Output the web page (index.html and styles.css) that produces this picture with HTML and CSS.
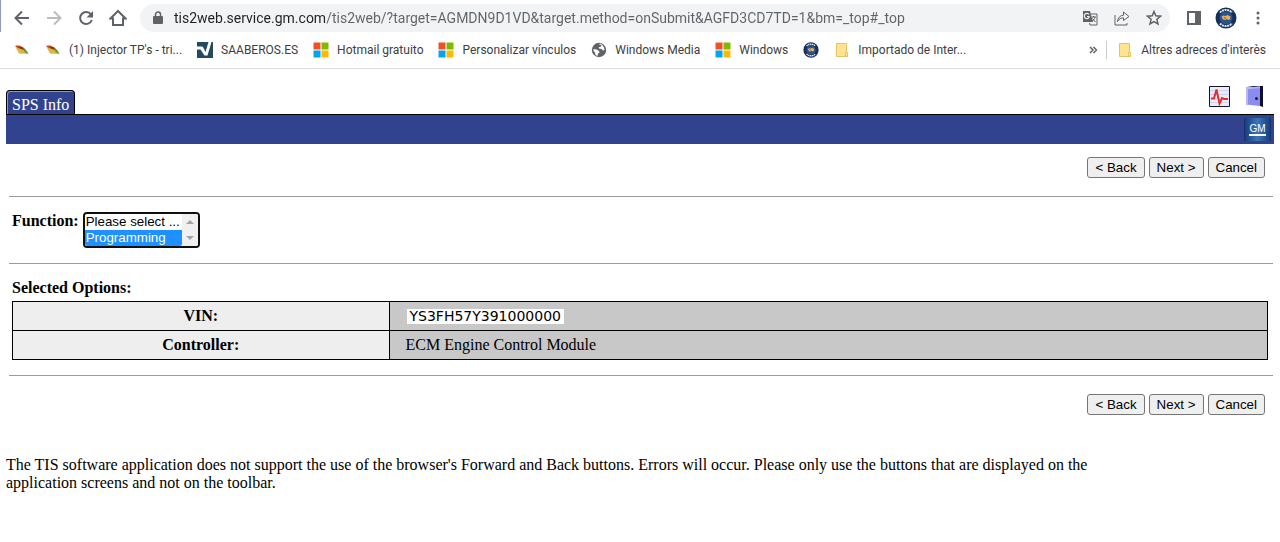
FILE: index.html
```html
<!DOCTYPE html>
<html lang="en">
<head>
    <meta charset="UTF-8">
    <title>SPS Info</title>
    <link rel="stylesheet" href="styles.css">
</head>
<body>
<!-- shared icons -->
<svg class="defs" width="0" height="0">
    <symbol id="ms" viewBox="0 0 16 16">
        <path fill="#f25022" d="M0.500 0.500h7v7h-7z"/><path fill="#7fba00" d="M8.500 0.500h7v7h-7z"/>
        <path fill="#00a4ef" d="M0.500 8.500h7v7h-7z"/><path fill="#ffb900" d="M8.500 8.500h7v7h-7z"/>
    </symbol>
    <symbol id="folder" viewBox="0 0 16 16">
        <path fill="#fee391" stroke="#e3c463" d="M2.500 1.500h10v9h1v4h-11z"/>
        <path fill="#fff0b8" stroke="#e3c463" d="M11.500 10.500h2v3.500h-2z"/>
    </symbol>
    <symbol id="wing" viewBox="0 0 16 16">
        <path fill="#c9502c" d="M1 4c5-1.500 9 1 10.500 5l-4.500 1z"/>
        <path fill="#7b3b20" d="M4 4.500l5 1 3 4-5-1z"/>
        <path fill="#e3b53c" d="M1.500 5l9.500 3.500 3.500 3.500-9.500-.5z"/>
        <path fill="#5f9a3f" d="M9 5.500c3 1.500 4.500 4 5.500 6.500l-4-2z"/>
    </symbol>
    <symbol id="badge" viewBox="0 0 22 22">
        <circle cx="11" cy="11" r="10.500" fill="#17305a"/>
        <path d="M5 5.500a8.300 8.300 0 0 1 12 0M5 16.500a8.300 8.300 0 0 0 12 0" fill="none" stroke="#dbe4ef" stroke-width="2" stroke-dasharray="2 .6"/>
        <circle cx="11" cy="11" r="6.500" fill="#28568c"/>
        <path fill="#e7aa63" d="M6.500 9.500l2-1 2 .5 2-1 3 1.500-.5 3-2 .500-1-1-1.500 1-2.500-.5z"/>
        <path d="M9 10.500l2 1" stroke="#8a5a34"/>
    </symbol>
</svg>

<div class="browser">
    <div class="toolbar">
        <button class="tool" aria-label="Back"><svg width="16" height="16" viewBox="0 0 16 16"><path class="line" d="M15 8H2M8 1.500L1.500 8 8 14.500"/></svg></button>
        <button class="tool off" aria-label="Forward"><svg width="16" height="16" viewBox="0 0 16 16"><path class="line" d="M1 8h13M8 1.500L14.500 8 8 14.500"/></svg></button>
        <button class="tool" aria-label="Reload"><svg width="16" height="16" viewBox="0 0 16 16"><path class="line" d="M13 4.500A6 6 0 1 0 13.800 10"/><path class="solid" d="M15 1v6.500H8.500z"/></svg></button>
        <button class="tool" aria-label="Home"><svg width="18" height="18" viewBox="0 0 18 18"><path class="line" d="M1.500 9.500L9 2l7.500 7.500H14V16H4V9.500z"/></svg></button>
        <div class="omnibox">
            <svg class="lock" width="12" height="14" viewBox="0 0 12 14"><path class="solid" d="M2 5h8a1 1 0 0 1 1 1v6a1 1 0 0 1-1 1H2a1 1 0 0 1-1-1V6a1 1 0 0 1 1-1z"/><path class="line thin" d="M3.500 5V3.500a2.500 2.500 0 0 1 5 0V5"/></svg>
            <input class="url" type="text" aria-label="Address" value="tis2web.service.gm.com/tis2web/?target=AGMDN9D1VD&amp;target.method=onSubmit&amp;AGFD3CD7TD=1&amp;bm=_top#_top">
            <button class="tool" aria-label="Translate"><svg width="16" height="16" viewBox="0 0 16 16">
                <path class="solid" d="M1 1h7l3 11H1z"/><path d="M7 4.500A2.600 2.600 0 1 0 7 7.500V6.500H5" fill="none" stroke="#f1f3f4" stroke-width="1.200"/>
                <path d="M9 4h6v11H8l-.5-2" fill="none" stroke="#5f6368"/><path d="M9.500 7h4.500M11.500 6v1M13 7c-.5 2-1.500 3.500-3 4.500M10.500 8.500l3 3.500" fill="none" stroke="#5f6368"/></svg></button>
            <button class="tool" aria-label="Share"><svg width="16" height="16" viewBox="0 0 16 16"><path class="line hair" d="M1 5v10h12v-2M3.500 11.500c.5-4 2.500-6 6-6.300V2L15 6.500l-5.500 4V7.800C7 7.800 5 9 3.500 11.500z"/></svg></button>
            <button class="tool" aria-label="Bookmark"><svg width="16" height="16" viewBox="0 0 16 16"><path class="line thin" d="M8 1.500l1.800 4.300 4.700.4-3.600 3.100 1.100 4.600L8 11.500l-4 2.400 1.100-4.600L1.500 6.200l4.700-.4z"/></svg></button>
        </div>
        <button class="tool" aria-label="Side panel"><svg width="14" height="14" viewBox="0 0 14 14"><path class="solid" fill-rule="evenodd" d="M0 0h14v14H0zM2 2v10h6V2z"/></svg></button>
        <button class="tool" aria-label="Profile"><svg width="22" height="22"><use href="#badge"/></svg></button>
        <button class="tool" aria-label="Menu"><svg width="4" height="14" viewBox="0 0 4 14"><circle class="solid" cx="2" cy="2" r="1.500"/><circle class="solid" cx="2" cy="7" r="1.500"/><circle class="solid" cx="2" cy="12" r="1.500"/></svg></button>
    </div>
    <div class="bookmarks">
        <a href="#" aria-label="Injector"><svg width="16" height="16"><use href="#wing"/></svg></a>
        <a href="#"><svg width="16" height="16"><use href="#wing"/></svg>(1) Injector TP's - tri...</a>
        <a href="#"><svg width="16" height="16" viewBox="0 0 16 16"><path fill="#234a60" d="M0 0h16v16H0z"/><path fill="#fff" d="M0 4.500h4.500c1 0 1.500.5 2 1.500l2 4L11.500 0h3L10.500 13.500H7.500L3.500 7.500H0z"/></svg>SAABEROS.ES</a>
        <a href="#"><svg width="16" height="16"><use href="#ms"/></svg>Hotmail gratuito</a>
        <a href="#"><svg width="16" height="16"><use href="#ms"/></svg>Personalizar vínculos</a>
        <a href="#"><svg width="16" height="16" viewBox="0 0 16 16"><circle class="solid" cx="8" cy="8" r="7.200"/><path fill="#fff" d="M2.500 7l3 .5 2.500 1.500.5 1.500-1.500 1-.5 2.500-2-1-.5-2.500-1.500-1.500zM8 2.500l2.500.5-.5 1.500-2.500 1 .5 1 2.500.5 1.500 1.500 1.500-.5-.5-2.500-2-3-2-1z"/></svg>Windows Media</a>
        <a href="#"><svg width="16" height="16"><use href="#ms"/></svg>Windows</a>
        <a href="#" aria-label="Forum"><svg width="16" height="16"><use href="#badge"/></svg></a>
        <a href="#"><svg width="16" height="16"><use href="#folder"/></svg>Importado de Inter...</a>
        <button class="more" aria-label="More bookmarks"><svg width="8" height="8" viewBox="0 0 8 8"><path class="line thin" d="M1 1l3 3-3 3M4.500 1l3 3-3 3"/></svg></button>
        <a class="other" href="#"><svg width="16" height="16"><use href="#folder"/></svg>Altres adreces d'interès</a>
    </div>
</div>

<div class="page">
    <div class="header">
        <a class="tab" href="#">SPS Info</a>
        <div class="shortcuts">
            <a href="#" aria-label="Diagnostics"><svg width="21" height="21" viewBox="0 0 21 21">
                <path fill="#e9ebfa" stroke="#15152a" d="M.5.500h20v20H.500z"/>
                <path d="M1 4.500h19M1 8.500h19M1 12.500h19M1 16.500h19" stroke="#cfd2f0"/>
                <path d="M2 12.500h3l2.500-9 3 14 2.500-5.500 2 1h4" fill="none" stroke="#e2302c" stroke-width="2"/></svg></a>
            <a href="#" aria-label="Exit"><svg width="19" height="21" viewBox="0 0 19 21">
                <path fill="#10102c" d="M1 0h16v21l-3-1V2z"/><path fill="#8b8cf0" d="M0 1.500l14-1V20L0 18.500z"/>
                <path fill="#b5b6fb" d="M0 1.500l14-1V2L2 3.200v15.500l-2-.2z"/><circle cx="10.500" cy="12.500" r="1.500" fill="#16163a"/></svg></a>
        </div>
    </div>
    <div class="bar"><span class="gm"><span>GM</span></span></div>

    <form class="content">
        <div class="buttons">
            <button type="button">&lt; Back</button>
            <button type="button">Next &gt;</button>
            <button type="button">Cancel</button>
        </div>
        <hr>
        <div class="function">
            <label for="function">Function:</label>
            <div class="listbox">
                <select id="function" size="2">
                    <option>Please select ...</option>
                    <option class="chosen">Programming</option>
                </select>
                <svg width="16" height="32" viewBox="0 0 16 32"><path fill="#f0f0f0" d="M0 0h16v32H0z"/><path fill="#a3a3a3" d="M4 10l4-4 4 4zM4 22l4 4 4-4z"/></svg>
            </div>
        </div>
        <hr>
        <div class="selected">
            <h2>Selected Options:</h2>
            <table>
                <tr><th>VIN:</th><td><span class="vin">YS3FH57Y391000000</span></td></tr>
                <tr><th>Controller:</th><td>ECM Engine Control Module</td></tr>
            </table>
        </div>
        <hr>
        <div class="buttons bottom">
            <button type="button">&lt; Back</button>
            <button type="button">Next &gt;</button>
            <button type="button">Cancel</button>
        </div>
    </form>
    <p class="note">The TIS software application does not support the use of the browser's Forward and Back buttons. Errors will occur. Please only use the buttons that are displayed on the application screens and not on the toolbar.</p>
</div>
</body>
</html>
```
FILE: styles.css
```css
*{ box-sizing:border-box; }
body{ margin:0; background:#fff; color:#000; font:16px/18px "Liberation Serif", "Times New Roman", serif; }
svg{ display:block; flex:none; }
.defs{ position:absolute; }

/* browser */
.browser{ border-bottom:1px solid #dadce0; font-family:Roboto, "Segoe UI", sans-serif; color:#3c4043; }
.toolbar{ display:flex; align-items:center; padding:4px 6px 0; height:32px; box-shadow:inset 1px 0 0 #8e9ac0; }
.tool{ display:flex; align-items:center; justify-content:center; flex:none; width:32px; height:28px; padding:0; border:0; background:none; }
.line{ fill:none; stroke:#5f6368; stroke-width:2; }
.thin{ stroke-width:1.5px; }
.hair{ stroke-width:1px; }
.solid{ fill:#5f6368; }
.off .line{ stroke:#babcbe; }
.omnibox{ display:flex; align-items:center; flex:1; height:28px; margin:0 8px 0 6px; padding-left:12px; border-radius:14px; background:#f1f3f4; }
.url{ flex:1; min-width:0; height:28px; margin-left:10px; padding:0; border:0; outline:0; font:14px Roboto, "Segoe UI", sans-serif; color:transparent; background:linear-gradient(90deg, #202124 151px, #5f6368 151px); -webkit-background-clip:text; background-clip:text; }
.bookmarks{ display:flex; align-items:center; gap:15px; height:36px; padding:0 14px; font-size:12px; }
.bookmarks a{ display:flex; align-items:center; gap:8px; color:inherit; text-decoration:none; white-space:nowrap; }
.more{ margin:0 -6px 0 auto; padding:0; border:0; background:none; }
.bookmarks .other{ padding-left:10px; border-left:1px solid #c8cacd; }

/* application */
.page{ padding:17px 6px 0; }
.header{ display:flex; justify-content:space-between; align-items:flex-end; height:28px; }
.tab{ height:24px; padding:5px 5px 0; border:1px solid #000; border-bottom:0; border-radius:4px 4px 0 0; background:#31438e; box-shadow:inset 1px 1px 0 #8d98c4; color:#fff; text-decoration:none; }
.shortcuts{ display:flex; gap:16px; padding:0 9px 7px 0; }
.bar{ display:flex; justify-content:flex-end; height:30px; padding:3px 3px 3px 0; border-top:1px solid #000; background:#31438e; }
.gm{ display:flex; align-items:center; justify-content:center; width:27px; border:1px solid #1d2f6c; border-width:0 1px; background:linear-gradient(90deg, #16407f, #3a77b8, #16407f); }
.gm span{ border-bottom:2px solid #fff; font:10px/11px "Liberation Sans", Arial, sans-serif; color:#fff; }
.content{ padding:0 1px 0 3px; }
.buttons{ display:flex; justify-content:flex-end; gap:4px; padding:13px 8px 18px; }
.bottom{ padding-top:18px; }
.buttons button{ height:21px; padding:0 7px; border:1px solid #767676; border-radius:3px; background:#efefef; font-family:"Liberation Sans", Arial, sans-serif; color:#000; }
hr{ height:1px; margin:0; border:0; background:#9a9a9a; }
.function{ display:flex; gap:4px; height:66px; padding:15px 3px 0; font-weight:bold; }
.listbox{ display:flex; height:36px; border:2px solid #101010; border-radius:4px; overflow:hidden; }
.listbox select{ width:97px; height:32px; padding:0; border:0; outline:0; overflow:hidden; font-family:"Liberation Sans", Arial, sans-serif; color:#000; }
.listbox option{ height:16px; min-height:16px; padding:0 1px; line-height:16px; }
.listbox .chosen{ background:#1e90ff; color:#fff; }
.selected{ padding:15px 5px 15px 3px; }
h2{ margin:0 0 4px; font-size:16px; line-height:18px; }
table{ width:100%; border-collapse:collapse; }
th, td{ height:29px; padding:0 16px; border:1px solid #000; }
th{ width:30%; background:#eee; }
td{ background:#c8c8c8; }
.vin{ display:inline-block; margin-left:1px; padding:0 3px; background:#fff; font:14px/15px "DejaVu Sans", sans-serif; }
.note{ width:87%; margin:23px 0 0; }
```
